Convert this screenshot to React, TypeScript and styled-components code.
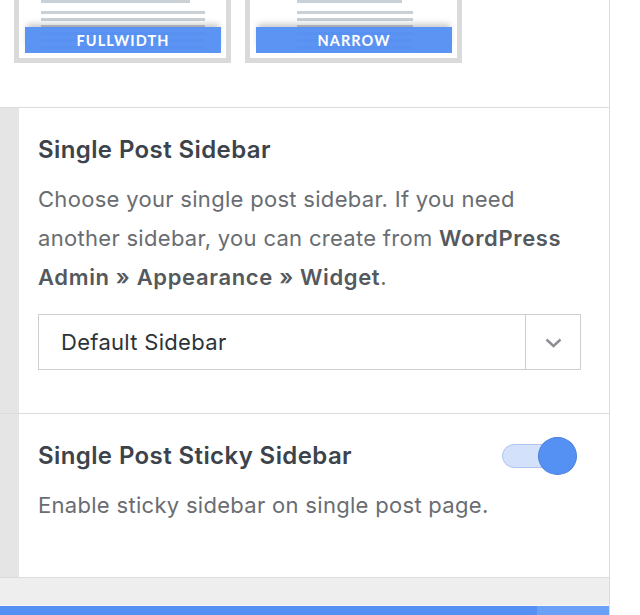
import React from "react";
import styled, { createGlobalStyle } from "styled-components";

const GlobalStyle = createGlobalStyle`
  html, body { margin: 0; padding: 0; background: #ffffff; }
  body { font-family: Inter, "Noto Sans", sans-serif; -webkit-font-smoothing: antialiased; }
  * { box-sizing: border-box; }
`;

const Page = styled.div`
  width: 640px;
  height: 615px;
  overflow: hidden;
  background: #ffffff;
`;

const Panel = styled.div`
  width: 610px;
  height: 615px;
  border-right: 1px solid #dcdcde;
  display: flex;
  flex-direction: column;
  background: #ffffff;
`;

const LayoutSection = styled.div`
  height: 108px;
  flex: none;
  overflow: hidden;
  display: flex;
  align-items: flex-end;
  gap: 14px;
  padding: 0 0 44px 14px;
  border-bottom: 1px solid #dcdcde;
`;

const Thumb = styled.div`
  flex: none;
  width: 217px;
  border: 5px solid #dadada;
  padding: 6px 5px 5px 6px;
  background: #ffffff;
`;

const Preview = styled.div`
  position: relative;
  width: 196px;
  height: 100px;
  svg { display: block; }
`;

const ThumbLabel = styled.div`
  position: absolute;
  left: 0;
  right: 0;
  bottom: 0;
  height: 26px;
  background: rgba(78, 139, 243, 0.92);
  box-shadow: 0 -5px 6px -2px rgba(0, 0, 0, 0.22);
  color: #ffffff;
  font-family: Lato, "Open Sans", sans-serif;
  font-weight: 700;
  font-size: 14.5px;
  letter-spacing: 1.1px;
  display: flex;
  align-items: center;
  justify-content: center;
`;

const Section = styled.div<{ $h: number }>`
  display: flex;
  flex: none;
  height: ${(p) => p.$h}px;
  border-bottom: 1px solid #dcdcde;
`;

const Strip = styled.div`
  width: 19px;
  flex: none;
  background: #e5e5e5;
`;

const Content = styled.div`
  flex: 1;
  padding: 27px 28px 0 19px;
`;

const TitleRow = styled.div`
  display: flex;
  align-items: center;
  justify-content: space-between;
  height: 30px;
`;

const Title = styled.h3`
  margin: 0;
  font-size: 24px;
  letter-spacing: 0.4px;
  line-height: 30px;
  font-weight: 600;
  color: #3c434a;
`;

const Desc = styled.p`
  margin: 15px 0 0;
  font-size: 22px;
  letter-spacing: 0.3px;
  line-height: 39px;
  color: #696d71;
  b { font-weight: 600; color: #54595e; letter-spacing: 0.65px; }
`;

const Select = styled.div`
  margin-top: 17px;
  height: 56px;
  border: 1px solid #cfcfd1;
  display: flex;
  align-items: stretch;
`;

const SelectValue = styled.div`
  flex: 1;
  display: flex;
  align-items: center;
  padding-left: 22px;
  font-size: 22px;
  letter-spacing: 0.3px;
  color: #2c3338;
`;

const SelectArrow = styled.div`
  width: 55px;
  flex: none;
  border-left: 1px solid #cfcfd1;
  display: flex;
  align-items: center;
  justify-content: center;
  padding-top: 2px;
`;

const Toggle = styled.div`
  position: relative;
  width: 75px;
  height: 38px;
  margin-right: 4px;
  flex: none;
`;

const Track = styled.div`
  position: absolute;
  left: 0;
  top: 7px;
  width: 64px;
  height: 24px;
  border-radius: 12px;
  background: #d3e1fb;
  border: 1px solid #aec5f0;
`;

const Knob = styled.div`
  position: absolute;
  right: 0;
  top: 0;
  width: 39px;
  height: 38px;
  border-radius: 50%;
  background: #5590f3;
  border: 1px solid #4a80de;
`;

const Footer = styled.div`
  height: 28px;
  flex: none;
  background: #eeeeee;
  border-bottom: 1px solid #f6f6f6;
`;

const BottomBar = styled.div`
  flex: 1;
  display: flex;
`;

const BarMain = styled.div`
  flex: 1;
  background: #5590f4;
`;

const BarSide = styled.div`
  width: 72px;
  background: #6aa0f6;
`;

const ThumbPreview: React.FC<{ x1: number; x2: number; xs: number; label: string }> = ({ x1, x2, xs, label }) => {
  const lines = [58, 65, 72, 79, 86, 93];
  return (
    <Preview>
      <svg width="196" height="100" viewBox="0 0 196 100">
        <rect x={x1} y={26} width={xs - x1} height={3} fill="#c9d1d7" />
        <rect x={x1} y={33} width={x2 - x1} height={3} fill="#c9d1d7" />
        <rect x={x1} y={40} width={x2 - x1} height={3} fill="#c9d1d7" />
        <rect x={x1} y={47} width={xs - x1} height={3} fill="#c9d1d7" />
        {lines.map((y) => (
          <rect key={y} x={x1} y={y} width={x2 - x1} height={3} fill="#c9d1d7" />
        ))}
      </svg>
      <ThumbLabel>{label}</ThumbLabel>
    </Preview>
  );
};

export default function App() {
  return (
    <>
      <GlobalStyle />
      <Page>
        <Panel>
          <LayoutSection>
            <Thumb>
              <ThumbPreview x1={16} x2={180} xs={165} label="FULLWIDTH" />
            </Thumb>
            <Thumb>
              <ThumbPreview x1={41} x2={157} xs={146} label="NARROW" />
            </Thumb>
          </LayoutSection>

          <Section $h={306}>
            <Strip />
            <Content>
              <Title>Single Post Sidebar</Title>
              <Desc>
                Choose your single post sidebar. If you need another sidebar, you can create from{" "}
                <b>WordPress Admin » Appearance » Widget</b>.
              </Desc>
              <Select>
                <SelectValue>Default Sidebar</SelectValue>
                <SelectArrow>
                  <svg width="17" height="10" viewBox="0 0 17 10">
                    <path d="M1.5 1.5 L8.5 8 L15.5 1.5" fill="none" stroke="#8c8f94" strokeWidth="2.4" />
                  </svg>
                </SelectArrow>
              </Select>
            </Content>
          </Section>

          <Section $h={164}>
            <Strip />
            <Content>
              <TitleRow>
                <Title>Single Post Sticky Sidebar</Title>
                <Toggle>
                  <Track />
                  <Knob />
                </Toggle>
              </TitleRow>
              <Desc>Enable sticky sidebar on single post page.</Desc>
            </Content>
          </Section>

          <Footer />
          <BottomBar>
            <BarMain />
            <BarSide />
          </BottomBar>
        </Panel>
      </Page>
    </>
  );
}
